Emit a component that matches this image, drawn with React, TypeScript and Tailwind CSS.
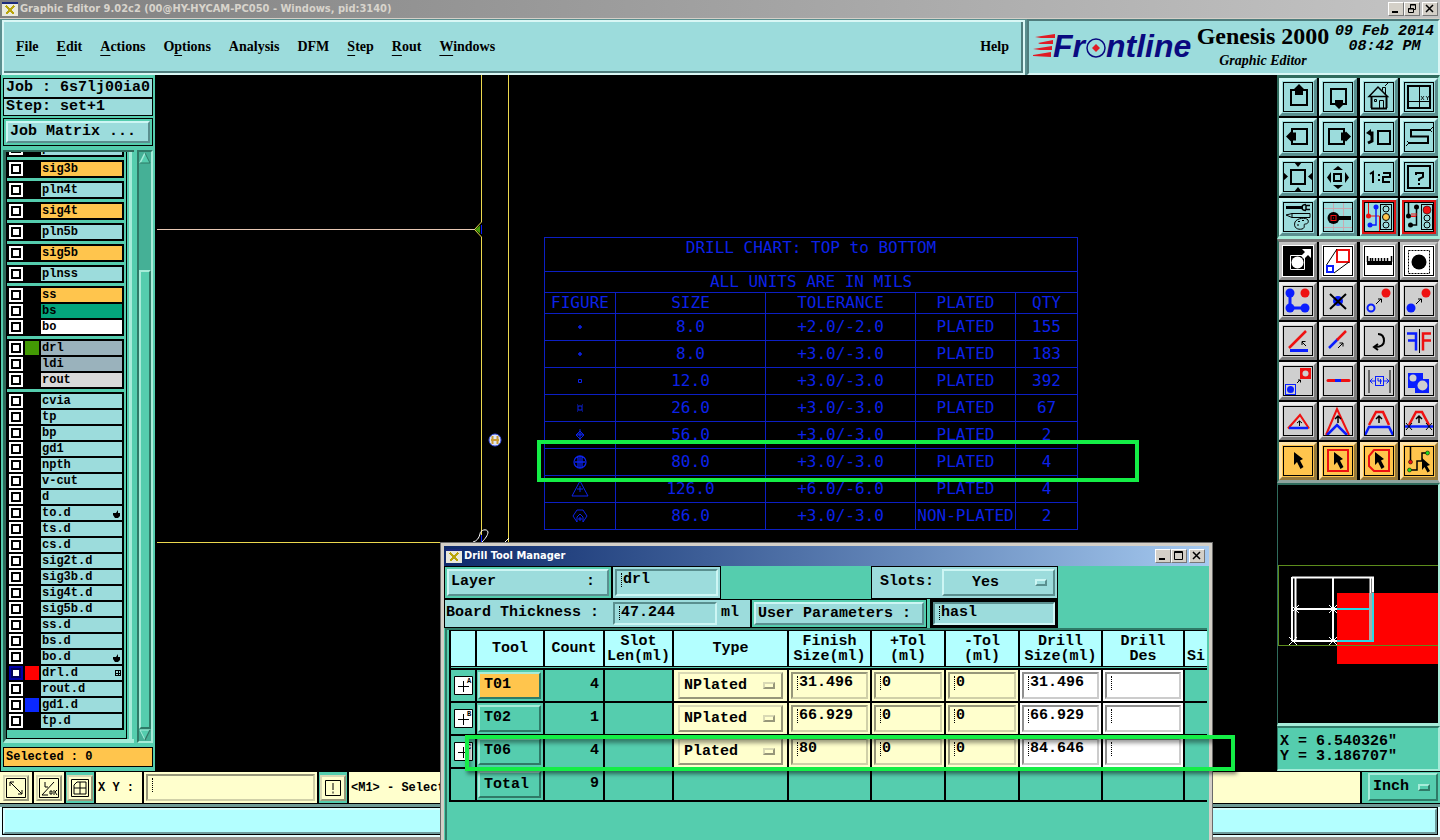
import { useId, useState } from "react";
import type { ReactNode } from "react";

// -------------------------------
// SHARED CLASSES
// -------------------------------
const MONO = "font-['Liberation_Mono','Courier_New',monospace] font-bold";
const SERIF = "font-['Liberation_Serif','Times_New_Roman',serif] font-bold";
const CAPTION = "font-['DejaVu_Sans_Condensed','DejaVu_Sans',sans-serif] font-bold";

const CYAN_UP = "border-t-[#cdf6f4] border-l-[#cdf6f4] border-b-[#5a8f8f] border-r-[#5a8f8f]";
const CYAN_DOWN = "border-t-[#5a8f8f] border-l-[#5a8f8f] border-b-[#cdf6f4] border-r-[#cdf6f4]";
const TEAL_UP = "border-t-[#a6ecd9] border-l-[#a6ecd9] border-b-[#2f7a67] border-r-[#2f7a67]";
const CREAM_DOWN = "border-t-[#97977a] border-l-[#97977a] border-b-[#d0d0a8] border-r-[#d0d0a8]";
const CREAM_UP = "border-t-[#d9d9b4] border-l-[#d9d9b4] border-b-[#97977a] border-r-[#97977a]";
const WHITE_DOWN = "border-t-[#8f8f8f] border-l-[#8f8f8f] border-b-[#cccccc] border-r-[#cccccc]";
const GREY_UP = "border-t-white border-l-white border-b-[#777] border-r-[#777]";

// -------------------------------
// LAYERS
// -------------------------------
interface Layer {
  name: string;
  bg?: string;
  color?: string;
  mark?: "hand" | "grid";
  active?: boolean;
}

const ORANGE = "bg-[#ffc54d]";

const layerGroups: Layer[][] = [
  [{ name: "pln3b" }],
  [{ name: "sig3b", bg: ORANGE }],
  [{ name: "pln4t" }],
  [{ name: "sig4t", bg: ORANGE }],
  [{ name: "pln5b" }],
  [{ name: "sig5b", bg: ORANGE }],
  [{ name: "plnss" }],
  [{ name: "ss", bg: ORANGE }, { name: "bs", bg: "bg-[#04a57c]" }, { name: "bo", bg: "bg-white" }],
  [
    { name: "drl", bg: "bg-[#9ab2bc]", color: "bg-[#439a04]" },
    { name: "ldi", bg: "bg-[#9ab2bc]" },
    { name: "rout", bg: "bg-[#d9d9d9]" },
  ],
  [
    { name: "cvia" },
    { name: "tp" },
    { name: "bp" },
    { name: "gd1" },
    { name: "npth" },
    { name: "v-cut" },
    { name: "d" },
    { name: "to.d", mark: "hand" },
    { name: "ts.d" },
    { name: "cs.d" },
    { name: "sig2t.d" },
    { name: "sig3b.d" },
    { name: "sig4t.d" },
    { name: "sig5b.d" },
    { name: "ss.d" },
    { name: "bs.d" },
    { name: "bo.d", mark: "hand" },
    { name: "drl.d", color: "bg-[#ff0000]", mark: "grid", active: true },
    { name: "rout.d" },
    { name: "gd1.d", color: "bg-[#0a28ff]" },
    { name: "tp.d" },
  ],
];

function LayerRow({ layer }: { layer: Layer }) {
  const id = useId();
  return (
    <div className="flex h-3.5 shrink-0 gap-0.5">
      <input
        id={id}
        type="checkbox"
        className={`size-3.5 appearance-none bg-white ${
          layer.active
            ? "shadow-[inset_0_0_0_2px_#0000a8,inset_0_0_0_4px_#00005a]"
            : "shadow-[inset_0_0_0_2px_#fff,inset_0_0_0_4px_#000]"
        }`}
      />
      <span className={`size-3.5 ${layer.color ?? "bg-black"}`} />
      <label
        htmlFor={id}
        className={`flex flex-1 items-center justify-between px-px text-[12px] leading-[14px] ${layer.bg ?? "bg-[#9cdcdc]"}`}
      >
        {layer.name}
        {layer.mark === "hand" && (
          <svg width="9" height="9" viewBox="0 0 9 9">
            <path d="M1 4h3l2-3v3h2v3l-2 2H3L1 6z" />
          </svg>
        )}
        {layer.mark === "grid" && (
          <svg width="6" height="6" viewBox="0 0 6 6" shapeRendering="crispEdges">
            <path d="M.5.5h5v5h-5zM3 0v6M0 3h6" fill="none" stroke="#000" />
          </svg>
        )}
      </label>
    </div>
  );
}

function LayerPanel() {
  return (
    <aside className="flex w-[155px] shrink-0 flex-col border-l border-black bg-[#55cdae] px-0.5 pt-[3px] pb-1">
      <div className="border border-black bg-[#9cdcdc] pl-0.5 text-[15px] leading-[18px] whitespace-nowrap">Job : 6s7lj00ia0</div>
      <div className="border border-black bg-[#9cdcdc] pl-0.5 text-[15px] leading-[16px]">Step: set+1</div>
      <div className="mt-0.5 border border-black p-0.5">
        <button className={`block w-full border-2 bg-[#9cdcdc] px-0.5 text-left text-[15px] leading-[18px] ${CYAN_UP}`}>
          Job Matrix ...
        </button>
      </div>

      <div className="mt-1 flex min-h-0 flex-1 justify-between">
        <div className="flex w-[131px] border-t-2 border-b-4 border-l-3 border-t-[#2f6b5c] border-b-[#a6ecd9] border-l-[#2f6b5c] pr-0.5">
          <div className="flex flex-1 flex-col justify-end gap-[3px] overflow-hidden border-x border-b border-black pr-0.5 pb-2">
            {layerGroups.map((group) => (
              <div key={group[0].name} className="flex shrink-0 flex-col gap-0.5 bg-black p-0.5">
                {group.map((layer) => (
                  <LayerRow key={layer.name} layer={layer} />
                ))}
              </div>
            ))}
          </div>
          <span className="ml-0.5 w-[3px] bg-[#a6ecd9]" />
        </div>

        {/* Scrollbar */}
        <div className="flex w-4 flex-col border-2 border-t-[#2f7a67] border-r-[#a6ecd9] border-b-[#a6ecd9] border-l-[#2f7a67] bg-[#45b096]">
          <svg width="12" height="12" viewBox="0 0 12 12">
            <path d="M6 1L1 11h10z" fill="#55cdae" />
            <path d="M6 1L1 11" stroke="#a6ecd9" strokeWidth="1.5" />
            <path d="M6 1l5 10H1" fill="none" stroke="#2f7a67" />
          </svg>
          <span className="flex-[107]" />
          <span className={`flex-[460] border-2 bg-[#55cdae] ${TEAL_UP}`} />
          <svg width="12" height="12" viewBox="0 0 12 12">
            <path d="M6 11L1 1h10z" fill="#55cdae" stroke="#a6ecd9" />
            <path d="M6 11l5-10" stroke="#2f7a67" strokeWidth="1.5" />
          </svg>
        </div>
      </div>

      <div className="mt-1 border border-black bg-[#ffc54d] px-0.5 text-[12px] leading-[18px]">Selected : 0</div>
    </aside>
  );
}

// -------------------------------
// TOOL ICONS
// -------------------------------
const RED = "#ee1111";
const BLUE = "#0a1eff";

const box = (x: number, y: number, w: number, h: number, stroke = "#000", sw = 2) => (
  <rect x={x} y={y} width={w} height={h} fill="none" stroke={stroke} strokeWidth={sw} />
);

const upArrow = (y: number) => (
  <path d={`M15 ${y + 7}v-6M12 ${y + 3}l3-3 3 3`} fill="none" stroke="#000" strokeWidth="1.5" />
);

const pointer = <path d="M11 6l9 7-3 1.5 3.500 6.500-3 2-3.500-7-3 3z" />;

const viewTools: [string, ReactNode][] = [
  ["Pan up", <>{box(8, 8, 16, 15)}<path d="M16 2l5 5-1 1v5h-8V8l-1-1z" /></>],
  ["Pan down", <>{box(8, 7, 15, 15)}<path d="M16 27l5-5-1-1v-3h-8v3l-1 1z" /></>],
  ["Home", (
    <>
      <path d="M5 14.500L14 5l9.500 9.500z" fill="none" stroke="#000" strokeWidth="1.500" />
      <path d="M15.500 26V18.500h4V26M10.500 17.500h2v2h-2zM18.500 8.500V5.500h3v7M21 4l3-3" fill="none" stroke="#000" />
      <path d="M7 26.500h16M7.500 14v12M22.500 14v12" stroke="#000" strokeWidth="2" />
    </>
  )],
  ["Coordinates", (
    <>
      {box(4, 4, 22, 22)}
      <path d="M15.500 4v22M4 19.500h22" stroke="#000" />
      <path d="M17 14l3 4M20 14l-3 4M22 14l1.500 2L25 14M23.500 16v2" fill="none" stroke="#000" strokeWidth=".8" />
    </>
  )],
  ["Pan left", <>{box(9, 7, 15, 15)}<path d="M3 14.500l5-5 1 1h4v8H9l-1 1z" /></>],
  ["Pan right", <>{box(6, 7, 15, 15)}<path d="M28 14.500l-5-5-1 1h-4v8h4l1 1z" /></>],
  ["Previous view", <>{box(14, 9, 12, 13)}<path d="M5 11h3v8l-4 2" fill="none" stroke="#000" strokeWidth="3" /><path d="M2 11l5-4v7z" /></>],
  ["Serpentine", (
    <>
      <path d="M26 8H7v6.500h17V21H5" fill="none" stroke="#000" strokeWidth="2" />
      <path d="M26 8l3-3M26 8l2 2M5 21l-2-2M5 21l-3 3" stroke="#000" />
    </>
  )],
  ["Zoom in", <>{box(8, 8, 14, 14)}<path d="M11 0h8l-4 5zM11 30h8l-4-5zM0 10v9l5-4.500zM30 10v9l-5-4.500z" /></>],
  ["Zoom out", <>{box(11, 12, 7, 7)}<path d="M10 8h10l-5-4zM10 23h10l-5 4zM8 10v11l-4-5.500zM22 10v11l4-5.500z" /></>],
  ["Scale", <path d="M6 12l3-2v11M15 12v2M15 17v2M19 11h7v4h-7v5h7" fill="none" stroke="#000" strokeWidth="2" />],
  ["Query", <>{box(4, 4, 22, 22)}<path d="M12 13v-2h7v4l-4 2v2M15 21v2" fill="none" stroke="#000" strokeWidth="2" /></>],
  ["Setup", (
    <>
      <path d="M3 5.500h17" stroke="#000" strokeWidth="3" />
      <path d="M27 3.500l-4 0v4h4M23 2.500c-3 0-4 1-4 3s1 3 4 3" fill="none" stroke="#000" strokeWidth="1.500" />
      <path d="M3 13l6-1.500h18v4H9zM9 11.500v4" fill="none" stroke="#000" />
      <path d="M12 20c2-4 11-5 13-2 1 3-1 4-3 4s1 4-3 5-9-1-7-7z" fill="none" stroke="#000" />
      <path d="M15 19.500h2M19 18.500h2M14 23h2" stroke="#000" />
    </>
  )],
  ["Probe", (
    <>
      <path d="M10.500 1v28M20.500 1v28M1 6.500h28M1 25.500h28" stroke="#c9a9b1" />
      <circle cx="10.500" cy="16" r="6" />
      <path d="M15 16h13" stroke="#000" strokeWidth="4" />
      {box(8, 13.5, 5, 5, RED, 1)}
      <path d="M10 15.500h1v1h-1z" fill={RED} />
    </>
  )],
  ["Snap nets", (
    <>
      {box(-0.5, -0.5, 31, 31, "#dd1414", 3)}
      {box(16.5, 2.5, 11, 25, "#000", 1)}
      <path d="M4.500 1v13h11v15" fill="none" stroke={RED} />
      <path d="M12 5v18H6" fill="none" stroke={BLUE} strokeWidth="1.500" />
      <circle cx="4.500" cy="14" r="2.500" fill={RED} />
      <circle cx="12" cy="5" r="2.500" fill={BLUE} />
      <circle cx="6" cy="23" r="2.500" fill={BLUE} />
      <circle cx="22" cy="7" r="3" fill="none" stroke="#000" />
      <circle cx="22" cy="15" r="3.500" fill="#ffc54d" stroke="#000" />
      <circle cx="22" cy="23" r="3" fill="none" stroke="#000" />
    </>
  )],
  ["Stop nets", (
    <>
      {box(-0.5, -0.5, 31, 31, "#dd1414", 3)}
      {box(17.5, 2.5, 11, 25, "#000", 1)}
      <path d="M4.500 1v13M12.500 5v18H6" fill="none" stroke="#000" strokeWidth="1.500" />
      <path d="M7 14.500h5M8 11v3M10 11v3M12 11v3" stroke={RED} />
      <circle cx="4.500" cy="14" r="2.500" />
      <circle cx="12.500" cy="5" r="2.500" />
      <circle cx="6.500" cy="23" r="2.500" />
      <circle cx="23" cy="8" r="4" fill={RED} stroke="#000" strokeWidth=".5" />
      <circle cx="23" cy="16" r="3" fill="none" stroke="#000" />
      <circle cx="23" cy="23" r="3" fill="none" stroke="#000" />
    </>
  )],
];

const editTools: [string, ReactNode][] = [
  ["Select shape", (
    <>
      <path d="M1 1h28v28H1z" />
      <path d="M7.500 9.500h14v14h-14z" fill="none" stroke="#fff" />
      <circle cx="14.500" cy="16.500" r="6" fill="#fff" />
      <path d="M18 10l4-4-3-3h9v9l-3-3-4 4z" fill="#fff" />
    </>
  )],
  ["Scale shape", <>{box(14, 4, 12, 12, RED)}{box(4, 20, 6, 6, BLUE)}<path d="M3.500 19L14 3M11 27l15-11" stroke="#000" /></>],
  ["Measure", (
    <>
      <path d="M3 15h25v4H3z" />
      <path d="M3.500 10v6M6.500 12v4M8.500 12v4M11.500 12v4M14.500 12v4M17.500 12v4M20.500 12v4M23.500 12v4M27.500 10v6" stroke="#000" strokeWidth="1.500" />
    </>
  )],
  ["Pad", <><rect x="4.5" y="4.5" width="21" height="23" fill="none" stroke="#000" strokeDasharray="2 1" /><circle cx="15" cy="16" r="7.500" /></>],
  ["Chain", (
    <>
      <path d="M7 7v15h15" fill="none" stroke={BLUE} strokeWidth="3" />
      <circle cx="7" cy="7" r="4.500" fill={BLUE} />
      <circle cx="7" cy="22" r="4.500" fill={BLUE} />
      <circle cx="22" cy="22" r="4.500" fill={BLUE} />
      <circle cx="22" cy="7" r="4.500" fill={RED} />
    </>
  )],
  ["Delete", <><circle cx="15" cy="15" r="5" fill={BLUE} /><path d="M7 8l16 15M23 8L7 23" stroke="#000" strokeWidth="2" /></>],
  ["Move", (
    <>
      <circle cx="22" cy="7" r="4.500" fill={RED} />
      <circle cx="7" cy="22" r="3.500" fill="none" stroke={BLUE} strokeWidth="2" />
      <path d="M12 18l5-5M14 13h3.500v3.500" fill="none" stroke="#000" />
    </>
  )],
  ["Copy", (
    <>
      <circle cx="22" cy="7" r="4.500" fill={RED} />
      <circle cx="7" cy="22" r="4.500" fill={BLUE} />
      <path d="M12 18l5-5M14 13h3.500v3.500" fill="none" stroke="#000" />
    </>
  )],
  ["Rotate line", (
    <>
      <path d="M6 22L23 5" stroke={RED} strokeWidth="2.500" />
      <path d="M7 24.500h18" stroke={BLUE} strokeWidth="3" />
      <path d="M23 20l-4-4M19 19v-3.500h3.500" fill="none" stroke="#000" />
    </>
  )],
  ["Stretch line", (
    <>
      <path d="M6 22l9-9" stroke={BLUE} strokeWidth="2.500" />
      <path d="M14 14l9-9" stroke={RED} strokeWidth="2.500" />
      <path d="M15 22l5-5M16.500 17H20v3.500" fill="none" stroke="#000" />
    </>
  )],
  ["Rotate", <path d="M14 8c4 0 6 3 6 7s-3 6-9 6M14 18l-4 3 4 3" fill="none" stroke="#000" strokeWidth="2" />],
  ["Mirror", (
    <>
      <path d="M3 7.500h9v17M12 14.500H4" fill="none" stroke={BLUE} strokeWidth="2.500" />
      <path d="M27 7.500h-8v17M19 14.500h8" fill="none" stroke={RED} strokeWidth="2.500" />
      <path d="M15.500 3v24" stroke="#000" />
    </>
  )],
  ["Substitute", (
    <>
      <path d="M17 2h11v11H17z" fill={RED} />
      <circle cx="22.500" cy="7.500" r="3" fill="#cfcfcf" />
      {box(2.5, 18.5, 10, 10, BLUE, 1)}
      <circle cx="7.500" cy="23.500" r="3.500" fill={BLUE} />
      <path d="M14 17l3-3M15 14h2.500v2.500" fill="none" stroke="#000" />
    </>
  )],
  ["Break line", (
    <>
      <path d="M5 14.500h21" stroke={RED} strokeWidth="3" strokeLinecap="round" />
      <path d="M12 14.500h6" stroke={BLUE} strokeWidth="3" />
    </>
  )],
  ["Spacing", (
    <>
      <path d="M5 4v23M26 4v23" stroke="#000" />
      {box(11.5, 10.500, 8, 9, BLUE, 1)}
      <path d="M14 12v3h4M16.500 13v5M6 15h5M8.500 12.500L6 15l2.500 2.500M20 15h5M22.500 12.500L25 15l-2.500 2.500" fill="none" stroke={BLUE} />
    </>
  )],
  ["Surface", (
    <>
      <path d="M4 7h15v6h6v14H11v-5H4z" fill={BLUE} />
      <circle cx="9" cy="12" r="3.500" fill="#cfcfcf" />
      <circle cx="18.500" cy="19.500" r="5" fill="#cfcfcf" />
    </>
  )],
  ["Triangle", (
    <>
      <path d="M5 22.500L17 9l9 13.500" fill="none" stroke={RED} strokeWidth="2" />
      <path d="M6 22h19" stroke={BLUE} strokeWidth="2.500" />
      <path d="M16.500 20v-5M14 17l2.500-2 2.500 2" fill="none" stroke="#000" />
    </>
  )],
  ["Peak", (
    <>
      <path d="M3 29L14 3l12 26" fill="none" stroke={RED} strokeWidth="2" />
      <path d="M4 29l10-10 10 10" fill="none" stroke={BLUE} strokeWidth="2.500" />
      {upArrow(10)}
    </>
  )],
  ["Trapezoid", (
    <>
      <path d="M5 19l7-13h7l6 13" fill="none" stroke={RED} strokeWidth="2.500" />
      <path d="M1 29l4-8h20l4 8" fill="none" stroke={BLUE} strokeWidth="2.500" />
      {upArrow(10)}
    </>
  )],
  ["Cut trapezoid", (
    <>
      <path d="M5 19l7-13h6l7 13" fill="none" stroke={RED} strokeWidth="2.500" />
      <path d="M1 20.500h28" stroke={BLUE} strokeWidth="2.500" />
      <path d="M2 17l6 7M8 17l-6 7M22 17l6 7M28 17l-6 7" stroke="#000" />
      {upArrow(10)}
    </>
  )],
  ["Select", pointer],
  ["Select in box", <>{box(5, 4, 20, 21, RED)}{pointer}</>],
  ["Select in polygon", <><path d="M10 4h15v21H10l-5-5V10z" fill="none" stroke={RED} strokeWidth="2" />{pointer}</>],
  ["Select net", (
    <>
      <path d="M6.500 1v14M5 24h8v-9h5V7h5" fill="none" stroke="#000" strokeWidth="1.500" />
      <circle cx="6.500" cy="16" r="2" fill={RED} stroke="#000" strokeWidth=".5" />
      <circle cx="5.500" cy="24" r="2" fill="#1edc1e" stroke="#000" strokeWidth=".5" />
      <circle cx="23.500" cy="7" r="2" fill="#1edc1e" stroke="#000" strokeWidth=".5" />
      <path d="M18 12l8 7-3 1 3 5-2.500 1.500-3-5.500-2.500 3z" />
    </>
  )],
];

function ToolButton({ name, icon, tone }: { name: string; icon: ReactNode; tone: string }) {
  return (
    <button aria-label={name} className={`size-[38px] border-3 p-px ${tone}`}>
      <svg width="30" height="30" viewBox="0 0 30 30" className="overflow-visible">
        {icon}
        <rect x=".5" y=".5" width="29" height="29" fill="none" stroke="#000" />
      </svg>
    </button>
  );
}

function editTone(index: number) {
  if (index < 4) return "bg-white border-t-[#c4c4c4] border-l-[#c4c4c4] border-b-[#8a8a8a] border-r-[#8a8a8a]";
  if (index < 20) return "bg-[#cfcfcf] border-t-[#ececec] border-l-[#ececec] border-b-[#7d7d7d] border-r-[#7d7d7d]";
  return "bg-[#ffc54d] border-t-[#ffe3a6] border-l-[#ffe3a6] border-b-[#95793c] border-r-[#95793c]";
}

function ToolPanel() {
  return (
    <aside className="flex w-[163px] shrink-0 flex-col bg-black">
      <div className="grid grid-cols-4 gap-0.5 border-t-3 border-r-2 border-b-3 border-l-2 border-t-[#2f6b5c] border-r-[#a6ecd9] border-b-[#a6ecd9] border-l-[#2f6b5c] bg-black">
        {viewTools.map(([name, icon]) => (
          <ToolButton key={name} name={name} icon={icon} tone={`bg-[#9cdcdc] ${CYAN_UP}`} />
        ))}
      </div>
      <div className="grid grid-cols-4 gap-0.5 border-t-3 border-r-2 border-b-3 border-l-2 border-t-[#777] border-r-[#dedede] border-b-[#8fa39e] border-l-[#2f6b5c] bg-black">
        {editTools.map(([name, icon], i) => (
          <ToolButton key={name} name={name} icon={icon} tone={editTone(i)} />
        ))}
      </div>

      {/* Overview */}
      <div className="min-h-0 flex-1 overflow-hidden border-t-2 border-r-2 border-b-3 border-l border-t-[#2f6b5c] border-r-[#a6ecd9] border-b-[#a6ecd9] border-l-[#2f6b5c]">
        <svg width="160" height="240" viewBox="0 0 160 240">
          <path d="M59 108h101v71H59z" fill="#ff0000" />
          <path d="M0 80.500h160M.5 80v80M0 160.500h160" fill="none" stroke="#5c8c1c" />
          <path d="M14 92.500h81v15M14 92v64M17.500 92v64M55 92v64M17 124h42M14 156h45M92.500 92v16" fill="none" stroke="#fff" strokeWidth="2" />
          <path d="M59 124h33M59 156h36V108" fill="none" stroke="#2bd8e4" strokeWidth="2" />
          <path d="M92.500 108v47" stroke="#b0a8a8" strokeWidth="3" />
          <path d="M13 120l8 8M21 120l-8 8M51 120l8 8M59 120l-8 8M11 152l8 8M19 152l-8 8M51 152l8 8M59 152l-8 8" stroke="#fff" />
        </svg>
      </div>

      {/* Cursor position */}
      <div className="border-t-2 border-r-2 border-b-2 border-l border-t-[#2f7a67] border-r-[#a6ecd9] border-b-[#a6ecd9] border-l-[#2f7a67] bg-[#55cdae] px-0.5 pt-1.5 pb-[5px] text-[15px] leading-[15px]">
        <p>X = 6.540326"</p>
        <p>Y = 3.186707"</p>
      </div>
    </aside>
  );
}

// -------------------------------
// DRILL CHART
// -------------------------------
const drillRows = [
  ["dot", "8.0", "+2.0/-2.0", "PLATED", "155"],
  ["dot", "8.0", "+3.0/-3.0", "PLATED", "183"],
  ["ring", "12.0", "+3.0/-3.0", "PLATED", "392"],
  ["square", "26.0", "+3.0/-3.0", "PLATED", "67"],
  ["diamond", "56.0", "+3.0/-3.0", "PLATED", "2"],
  ["circle", "80.0", "+3.0/-3.0", "PLATED", "4"],
  ["triangle", "126.0", "+6.0/-6.0", "PLATED", "4"],
  ["hexagon", "86.0", "+3.0/-3.0", "NON-PLATED", "2"],
];

const figures: Record<string, ReactNode> = {
  dot: <path d="M10 8v4M8 10h4M9 9h2v2H9z" />,
  ring: <path d="M8.500 8.500h3v3h-3z" />,
  square: <path d="M8 8h4v4H8zM7 7h1M12 7h1M7 13h1M12 13h1" />,
  diamond: <path d="M10 4v12M6 10h8M7 9h6M10 6l4 4-4 4-4-4z" />,
  circle: <path d="M16 10a6 6 0 1 1-12 0 6 6 0 0 1 12 0zM8 5v10M12 5v10M5 10h10M10 4v12" strokeWidth="1.300" />,
  triangle: <path d="M10 2l8 15H2zM10 7v6M7 10h6" />,
  hexagon: <path d="M7 4h6l4 6-4 6M7 4l-4 6 4 6M7 16v-5l3-3 3 3v5M8 13h4M10 11v4" />,
};

function DrillChart() {
  const cell = "border border-[#0c1fc4] p-0 text-center font-normal";
  return (
    <table className="absolute top-[162px] left-[389px] w-[533px] table-fixed border-collapse font-['DejaVu_Sans_Mono',monospace] text-[16px] leading-5 text-[#0c22e8]">
      <colgroup>
        <col className="w-[71px]" />
        <col className="w-[150px]" />
        <col className="w-[150px]" />
        <col className="w-[100px]" />
        <col className="w-[62px]" />
      </colgroup>
      <thead>
        <tr className="h-[34px] align-top">
          <th colSpan={5} className={cell}>DRILL CHART: TOP to BOTTOM</th>
        </tr>
        <tr className="h-[21px]">
          <th colSpan={5} className={cell}>ALL UNITS ARE IN MILS</th>
        </tr>
        <tr className="h-[21px]">
          {["FIGURE", "SIZE", "TOLERANCE", "PLATED", "QTY"].map((h) => (
            <th key={h} className={cell}>{h}</th>
          ))}
        </tr>
      </thead>
      <tbody>
        {drillRows.map(([figure, ...values], i) => (
          <tr key={i} className="h-[27px]">
            <td className={cell}>
              <svg width="20" height="20" viewBox="0 0 20 20" fill="none" stroke="#0c22e8" className="mx-auto">
                {figures[figure]}
              </svg>
            </td>
            {values.map((v, j) => (
              <td key={j} className={cell}>{v}</td>
            ))}
          </tr>
        ))}
      </tbody>
    </table>
  );
}

function Canvas() {
  return (
    <main className="relative min-w-0 flex-1 overflow-hidden bg-black">
      {/* Panel outline */}
      <svg width="400" height="500" viewBox="0 0 400 500" fill="none" stroke="#ecd84e" className="absolute top-0 left-0">
        <path d="M326.500 0v147l-7 7.500 7 7.500v303M353.500 0v467" />
        <path d="M2 154.500h318" stroke="#e8c8b4" />
        <path d="M2 467.500h320M320 467.500h35" />
        <path d="M320 154.500l5-4v8z" fill="#439a04" stroke="none" />
        <path d="M326.500 150v9M326.500 460v7" stroke="#0a1eff" />
        <path d="M318 467c4-1 6-4 7-8 0-4 7-6 8-2 0 3-3 7-6 10M350 467l4-4" stroke="#fff" />
        <circle cx="340" cy="365" r="6" fill="#dfe4f5" stroke="#3a52e0" />
        <path d="M337.500 361v8M342.500 361v8M336 365h8" stroke="#c89a34" strokeWidth="2" />
      </svg>
      <DrillChart />
      <div className="absolute top-[365px] left-[382px] h-[42px] w-[602px] border-4 border-[#14ee46]" />
    </main>
  );
}

// -------------------------------
// FORM PARTS
// -------------------------------
function TextField({ label, value, tone, className = "" }: { label: string; value: string; tone: string; className?: string }) {
  return (
    <div className={`flex items-start border-2 pt-px pl-1 ${tone} ${className}`}>
      <span className="mt-px h-3.5 w-0.5 shrink-0 border-l border-dotted border-black" />
      <input aria-label={label} defaultValue={value} className="h-4 w-full min-w-0 bg-transparent text-[15px] leading-4 outline-none" />
    </div>
  );
}

function OptionMenu({ label, options, tone, className = "" }: { label: string; options: string[]; tone: string; className?: string }) {
  const [value, setValue] = useState(options[0]);
  return (
    <div className={`flex items-center border-2 ${tone} ${className}`}>
      <select
        aria-label={label}
        value={value}
        onChange={(e) => setValue(e.target.value)}
        className="min-w-0 flex-1 appearance-none bg-transparent text-[15px] leading-5 outline-none"
      >
        {options.map((o) => (
          <option key={o}>{o}</option>
        ))}
      </select>
      <span className={`h-[7px] w-3 shrink-0 border-2 ${tone}`} />
    </div>
  );
}

function AppIcon() {
  return (
    <svg width="16" height="14" viewBox="0 0 16 14" shapeRendering="crispEdges">
      <path d="M0 0h16v14H0z" fill="#e9e9dc" />
      <path d="M0 0h16v2H0z" fill="#1c2a7c" />
      <path d="M4 4l8 8M12 4l-8 8" stroke="#b9a50c" strokeWidth="2" />
    </svg>
  );
}

function WindowButtons({ restore }: { restore?: boolean }) {
  const btn = `flex h-3.5 w-4 items-center justify-center border bg-[#d4d0c8] ${GREY_UP}`;
  return (
    <div className="flex">
      <button aria-label="Minimize" className={btn}>
        <svg width="10" height="10" viewBox="0 0 10 10"><path d="M1 8h6" stroke="#000" strokeWidth="2" /></svg>
      </button>
      <button aria-label={restore ? "Restore" : "Maximize"} className={btn}>
        <svg width="10" height="10" viewBox="0 0 10 10" fill="none" stroke="#000">
          {restore ? <path d="M3.500 4V.5h5v5H7M3 1h6M1.500 4.500h5v4h-5zM1 5h6" /> : <path d="M.5 .5h8v8h-8zM0 1.500h9" />}
        </svg>
      </button>
      <button aria-label="Close" className={`ml-0.5 ${btn}`}>
        <svg width="10" height="10" viewBox="0 0 10 10"><path d="M1 1l7 7M8 1L1 8" stroke="#000" strokeWidth="1.500" /></svg>
      </button>
    </div>
  );
}

// -------------------------------
// DRILL TOOL MANAGER
// -------------------------------
const tools = [
  { id: "T01", count: 4, mark: "A", types: ["NPlated", "Plated"], finish: "31.496", drill: "31.496", active: true },
  { id: "T02", count: 1, mark: "B", types: ["NPlated", "Plated"], finish: "66.929", drill: "66.929" },
  { id: "T06", count: 4, mark: "C", types: ["Plated", "NPlated"], finish: "80", drill: "84.646" },
];

const columns: [string, string][] = [
  ["", "w-[26px]"],
  ["Tool", "w-[68px]"],
  ["Count", "w-[60px]"],
  ["Slot\nLen(ml)", "w-[69px]"],
  ["Type", "w-[115px]"],
  ["Finish\nSize(ml)", "w-[83px]"],
  ["+Tol\n(ml)", "w-[74px]"],
  ["-Tol\n(ml)", "w-[74px]"],
  ["Drill\nSize(ml)", "w-[83px]"],
  ["Drill\nDes", "w-[82px]"],
  ["\nSi", "w-[24px]"],
];

function ToolTable() {
  const td = "border-r-2 border-b-2 border-black p-0";
  const cream = "bg-[#ffffcd]";
  return (
    <table className="w-[760px] table-fixed border-separate border-spacing-0 border-l-2 border-black text-[15px]">
      <colgroup>
        {columns.map(([, w], i) => (
          <col key={i} className={w} />
        ))}
      </colgroup>
      <thead>
        <tr className="h-[37px]">
          {columns.map(([title], i) => (
            <th key={i} className="border-y border-r-2 border-black bg-[#b3ffff] p-0 leading-[15px] whitespace-pre">
              {title}
            </th>
          ))}
        </tr>
      </thead>
      <tbody>
        <tr className="h-[3px]">
          <td colSpan={11} className="h-[3px] border-b-2 border-black bg-[#55cdae] p-0" />
        </tr>
        {tools.map((t) => (
          <tr key={t.id} className="h-[33px]">
            <td className={td}>
              <svg width="19" height="19" viewBox="0 0 19 19" className="mx-auto">
                <path d="M.5.5h18v18H.5z" fill="#fff" stroke="#000" />
                <path d="M9.500 5v11M4 10.500h11" stroke="#000" />
                <text x="13" y="7" fontSize="7" fontWeight="bold">{t.mark}</text>
              </svg>
            </td>
            <td className={td}>
              <button className={`mx-px block h-[27px] w-[63px] border-2 px-1 text-left ${TEAL_UP} ${t.active ? "bg-[#ffc54d]" : ""}`}>
                {t.id}
              </button>
            </td>
            <td className={`${td} pr-1 text-right`}>{t.count}</td>
            <td className={td} />
            <td className={`${td} ${cream}`}>
              <OptionMenu label={`${t.id} type`} options={t.types} tone={CREAM_UP} className="mx-auto h-[27px] w-[105px] pr-1.5 pl-1" />
            </td>
            <td className={`${td} ${cream}`}>
              <TextField label={`${t.id} finish size`} value={t.finish} tone={CREAM_DOWN} className="mx-0.5 h-[27px]" />
            </td>
            <td className={`${td} ${cream}`}>
              <TextField label={`${t.id} plus tolerance`} value="0" tone={CREAM_DOWN} className="mx-0.5 h-[27px]" />
            </td>
            <td className={`${td} ${cream}`}>
              <TextField label={`${t.id} minus tolerance`} value="0" tone={CREAM_DOWN} className="mx-0.5 h-[27px]" />
            </td>
            <td className={`${td} bg-white`}>
              <TextField label={`${t.id} drill size`} value={t.drill} tone={WHITE_DOWN} className="mx-0.5 h-[27px]" />
            </td>
            <td className={`${td} bg-white`}>
              <TextField label={`${t.id} designation`} value="" tone={WHITE_DOWN} className="mx-0.5 h-[27px]" />
            </td>
            <td className={td} />
          </tr>
        ))}
        <tr className="h-[33px]">
          <td className={td} />
          <td className={td}>
            <div className={`mx-px h-[27px] w-[63px] border-2 px-1 leading-6 ${TEAL_UP}`}>Total</div>
          </td>
          <td className={`${td} pr-1 text-right`}>9</td>
          {columns.slice(3).map((_, i) => (
            <td key={i} className={td} />
          ))}
        </tr>
      </tbody>
    </table>
  );
}

function DrillToolManager() {
  return (
    <section className="absolute top-[543px] bottom-0 left-[441px] w-[771px] border-x-3 border-t-3 border-[#d4d0c8] bg-[#55cdae] text-[15px] outline outline-[#6a6a6a]">
      <header className="flex h-[20px] items-center gap-0.5 bg-linear-to-r from-[#0f2a6b] to-[#a6caf0] pr-1 pl-0.5">
        <AppIcon />
        <h2 className={`flex-1 text-[11px] leading-4 text-white ${CAPTION}`}>Drill Tool Manager</h2>
        <WindowButtons />
      </header>

      <div className="flex h-[33px]">
        <div className="w-[168px] border border-black p-0.5">
          <button className={`flex h-full w-full items-center justify-between border-2 bg-[#9cdcdc] pr-3 pl-0.5 ${CYAN_UP}`}>
            <span>Layer</span>
            <span>:</span>
          </button>
        </div>
        <div className="w-[109px] border border-black bg-[#9cdcdc] p-0.5">
          <TextField label="Layer" value="drl" tone={CYAN_DOWN} className="h-full" />
        </div>
        <div className="ml-[150px] flex w-[187px] items-center border border-black bg-[#9cdcdc] p-0.5">
          <span className="w-[68px] pl-1.5">Slots:</span>
          <OptionMenu label="Slots" options={["Yes", "No"]} tone={CYAN_UP} className="h-full flex-1 pr-1.5 pl-7" />
        </div>
      </div>

      <div className="flex h-[29px]">
        <div className="flex w-[307px] items-center border border-black bg-[#9cdcdc] py-0.5">
          <span className="w-[168px] pl-px">Board Thickness :</span>
          <TextField label="Board Thickness" value="47.244" tone={CYAN_DOWN} className="h-full w-[104px]" />
          <span className="pl-1">ml</span>
        </div>
        <div className="w-[176px] border border-black p-0.5">
          <button className={`h-full w-full border-2 bg-[#9cdcdc] px-0.5 text-left leading-[18px] ${CYAN_UP}`}>User Parameters :</button>
        </div>
        <div className="ml-[3px] w-[128px] border-3 border-black bg-[#9cdcdc]">
          <TextField label="User Parameters" value="hasl" tone={CYAN_DOWN} className="h-full" />
        </div>
      </div>

      <div className="mr-0.5 ml-px h-full overflow-hidden border-t-2 border-l-2 border-[#2f7a67] pl-0.5">
        <ToolTable />
      </div>

      {/* Marked tool row */}
      <div className="pointer-events-none absolute top-[189px] left-[21px] h-[36px] w-[770px] border-4 border-[#14ee46] shadow-[2px_3px_4px_rgba(0,0,0,0.5),inset_2px_4px_4px_rgba(0,0,0,0.4)]" />
    </section>
  );
}

// -------------------------------
// HEADER
// -------------------------------
const menus = [
  { key: "F", before: "", rest: "ile" },
  { key: "E", before: "", rest: "dit" },
  { key: "A", before: "", rest: "ctions" },
  { key: "p", before: "O", rest: "tions" },
  { key: "", before: "Analysis", rest: "" },
  { key: "", before: "DFM", rest: "" },
  { key: "S", before: "", rest: "tep" },
  { key: "R", before: "", rest: "out" },
  { key: "W", before: "", rest: "indows" },
];

function FrontlineLogo() {
  return (
    <svg width="162" height="50" viewBox="0 0 162 50" aria-label="Frontline">
      <path d="M2 16l20-3v4l-14 0zM5 22l15-3v4l-13 0zM0 28l19-3v4l-12 0zM0 34l18-3v5l-18-1z" fill="#e01b24" />
      <g fill="#0a0a80" fontFamily="Liberation Sans, Arial, sans-serif" fontSize="32" fontWeight="bold" fontStyle="italic">
        <text x="20" y="36">Fr</text>
        <text x="73" y="36">ntline</text>
      </g>
      <circle cx="63" cy="27" r="9" fill="none" stroke="#0a0a80" strokeWidth="1.500" />
      <path d="M63 23l4 4-4 4-4-4z" fill="#e01b24" />
    </svg>
  );
}

function Header() {
  return (
    <>
      <div className="flex h-[18px] shrink-0 items-center gap-0.5 bg-linear-to-r from-[#808080] to-[#c4c4c4] pr-0.5 pl-0.5">
        <AppIcon />
        <h1 className={`flex-1 text-[11px] leading-4 text-[#d8d4cc] ${CAPTION}`}>
          Graphic Editor 9.02c2 (00@HY-HYCAM-PC050 - Windows, pid:3140)
        </h1>
        <WindowButtons restore />
      </div>

      <div className="flex h-[57px] shrink-0 border-t border-[#d4d0c8] bg-[#5a8f8f]">
        <div className="mt-px ml-0.5 flex-1 border-2 border-[#d9f7f5]">
          <nav className={`flex h-full items-center justify-between border-r-2 border-b-2 border-[#4f7d7d] bg-[#9cdcdc] px-3 text-[14px] ${SERIF}`}>
            <div className="flex gap-[18px]">
              {menus.map((m) => (
                <button key={m.before + m.key + m.rest} className="leading-4">
                  {m.before}
                  {m.key && <span className="underline underline-offset-4">{m.key}</span>}
                  {m.rest}
                </button>
              ))}
            </div>
            <button className="leading-4">Help</button>
          </nav>
        </div>
        <div className="ml-0.5 flex w-[413px] border-2 border-t-[#4f7d7d] border-r-[#d9f7f5] border-b-[#d9f7f5] border-l-[#4f7d7d] bg-[#9cdcdc] pl-1">
          <FrontlineLogo />
          <div className={`w-[136px] pt-px text-center ${SERIF}`}>
            <p className="text-[24px] leading-[29px] whitespace-nowrap">Genesis 2000</p>
            <p className="text-[14px] leading-5 italic">Graphic Editor</p>
          </div>
          <div className={`flex-1 pt-[3px] text-center text-[15px] leading-[15px] whitespace-nowrap italic ${MONO}`}>
            <p>09 Feb 2014</p>
            <p>08:42 PM</p>
          </div>
        </div>
      </div>
    </>
  );
}

// -------------------------------
// BOTTOM BARS
// -------------------------------
function BottomBars() {
  const iconBtn = `m-auto flex size-[26px] items-center justify-center border-2 bg-[#ffffcd] ${CREAM_UP}`;
  return (
    <>
      <div className="flex h-[33px] shrink-0 items-stretch gap-0.5 border-y border-black bg-black text-[12px]">
        <div className="flex w-8 bg-[#ffffcd]">
          <button aria-label="Resize" className={iconBtn}>
            <svg width="20" height="20" viewBox="0 0 20 20" fill="none" stroke="#000">
              <path d="M.5.5h19v19H.5zM4 4l12 12M4 8V4h4M16 12v4h-4" />
            </svg>
          </button>
        </div>
        <div className="flex w-[30px] bg-[#ffffcd]">
          <button aria-label="Angle" className={iconBtn}>
            <svg width="20" height="20" viewBox="0 0 20 20" fill="none" stroke="#000">
              <path d="M.5.5h19v19H.5zM3 17L15 4M3 17h6M6 4v5h3M11 13h2v3h-2zM15 12v5M18 12l-2 2 2 3" />
            </svg>
          </button>
        </div>
        <div className="flex w-7 bg-[#55cdae]">
          <button aria-label="Grid" className={iconBtn}>
            <svg width="18" height="18" viewBox="0 0 18 18" fill="none" stroke="#000">
              <path d="M.5.5h17v17H.5zM3 15V6l3-3h9v12zM9 3v12M3 9h12" />
            </svg>
          </button>
        </div>
        <label htmlFor="xy" className="flex w-[46px] items-center bg-[#ffffcd] pl-0.5">X Y :</label>
        <div className="w-[173px] bg-[#ffffcd] p-0.5">
          <div className={`flex h-full border-2 pl-1 ${CREAM_DOWN}`}>
            <span className="mt-0.5 h-3.5 border-l border-dotted border-black" />
            <input id="xy" className="w-full min-w-0 bg-transparent outline-none" />
          </div>
        </div>
        <div className="flex w-7 bg-[#55cdae]">
          <button aria-label="Alert" className={iconBtn}>
            <svg width="16" height="16" viewBox="0 0 16 16" fill="none" stroke="#000">
              <path d="M.5.5h15v15H.5zM8 3v7M8 11.500v2" />
            </svg>
          </button>
        </div>
        <p className="flex flex-1 items-center bg-[#ffffcd] pl-0.5">&lt;M1&gt; - Select</p>
        <div className="w-[78px] bg-[#55cdae] py-px pr-0.5 pl-1.5">
          <OptionMenu label="Units" options={["Inch", "mm"]} tone={TEAL_UP} className="h-[28px] pr-1.5 pl-[3px]" />
        </div>
      </div>
      <div className="h-[36px] shrink-0 border-t-3 border-b-3 border-t-[#6f9a96] border-b-[#9a9690] bg-[#e4ffff] px-0.5 pb-0.5">
        <div className="h-full border border-black">
          <div className="h-full border-2 border-t-[#d8ffff] border-r-[#6f9c9c] border-b-[#6f9c9c] border-l-[#d8ffff] bg-[#b3ffff]" />
        </div>
      </div>
    </>
  );
}

export default function App() {
  return (
    <div className={`relative flex h-screen flex-col overflow-hidden bg-black text-black ${MONO}`}>
      <Header />
      <div className="flex min-h-0 flex-1">
        <LayerPanel />
        <Canvas />
        <ToolPanel />
      </div>
      <BottomBars />
      <DrillToolManager />
    </div>
  );
}
